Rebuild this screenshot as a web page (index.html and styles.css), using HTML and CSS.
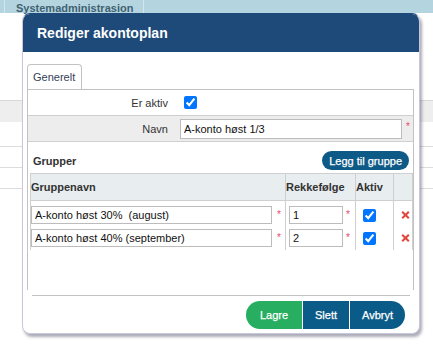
FILE: index.html
```html
<!DOCTYPE html>
<html>
<head>
  <title>Rediger akontoplan</title>
  <link rel="stylesheet" href="styles.css">
</head>
<body>
  <div class="top-bar">
    <div class="top-tab">Systemadministrasion</div>
  </div>
  <div class="page-list">
    <div class="list-head"></div>
    <div class="list-row first"></div>
    <div class="list-row"></div>
    <div class="list-row"></div>
  </div>

  <div class="dialog">
    <header class="dialog-header">Rediger akontoplan</header>
    <div class="dialog-body">
      <div class="tabs">
        <span class="tab">Generelt</span>
      </div>
      <div class="tab-panel">
        <div class="form-row">
          <label class="form-label">Er aktiv</label>
          <div class="form-field"><input type="checkbox" class="check" checked></div>
        </div>
        <div class="form-row shaded">
          <label class="form-label">Navn</label>
          <div class="form-field">
            <input type="text" class="name-input" value="A-konto høst 1/3">
            <span class="req">*</span>
          </div>
        </div>

        <div class="group-bar">
          <span class="group-title">Grupper</span>
          <button class="add-btn">Legg til gruppe</button>
        </div>

        <div class="group-table">
          <div class="grid-row head">
            <div class="cell">Gruppenavn</div>
            <div class="cell center">Rekkefølge</div>
            <div class="cell center">Aktiv</div>
            <div class="cell"></div>
          </div>
          <div class="grid-row first">
            <div class="cell"><input type="text" class="group-input" value="A-konto høst 30%  (august)"><span class="req">*</span></div>
            <div class="cell col-order"><input type="text" class="order-input" value="1"><span class="req">*</span></div>
            <div class="cell col-active"><input type="checkbox" class="check" checked></div>
            <div class="cell col-del">
              <svg width="9" height="8" viewBox="0 0 9 8"><path d="M1.2 0.8 L7.8 7.2 M7.8 0.8 L1.2 7.2" stroke="#e2473d" stroke-width="2.1"/></svg>
            </div>
          </div>
          <div class="grid-row last">
            <div class="cell"><input type="text" class="group-input" value="A-konto høst 40% (september)"><span class="req">*</span></div>
            <div class="cell col-order"><input type="text" class="order-input" value="2"><span class="req">*</span></div>
            <div class="cell col-active"><input type="checkbox" class="check" checked></div>
            <div class="cell col-del">
              <svg width="9" height="8" viewBox="0 0 9 8"><path d="M1.2 0.8 L7.8 7.2 M7.8 0.8 L1.2 7.2" stroke="#e2473d" stroke-width="2.1"/></svg>
            </div>
          </div>
        </div>
      </div>

      <div class="dialog-footer">
        <div class="btn-group">
          <button class="btn btn-save">Lagre</button>
          <button class="btn btn-delete">Slett</button>
          <button class="btn btn-cancel">Avbryt</button>
        </div>
      </div>
    </div>
  </div>
</body>
</html>
```

FILE: styles.css
```css
body {
  margin: 0;
  height: 354px;
  overflow: hidden;
  position: relative;
  background-color: #fff;
  color: #333;
  font-family: "Liberation Sans", Arial, sans-serif;
  font-size: 11px;
}

/* page behind the dialog */
.top-bar {
  height: 13px;
  background-color: #b4d5e0;
  display: flex;
}

.top-tab {
  margin-left: 4px;
  width: 140px;
  height: 13px;
  box-sizing: border-box;
  border-left: 1px solid #d3e6ec;
  border-right: 1px solid #d3e6ec;
  padding: 2px 0 0 11px;
  font-weight: bold;
  line-height: 13px;
  color: #3f6273;
  white-space: nowrap;
}

.page-list {
  margin-top: 87px;
}

.list-head {
  height: 21px;
  background-color: #eee;
  border-top: 1px solid #d8d8d8;
}

.list-row {
  height: 20px;
  border-bottom: 1px solid #ddd;
}

.list-row.first {
  height: 24px;
}

/* dialog */
.dialog {
  position: absolute;
  left: 22px;
  top: 13px;
  width: 398px;
  height: 321px;
  box-sizing: border-box;
  background-color: #fff;
  border: 1px solid #c8c8da;
  border-top-color: #1e4a79;
  border-radius: 8px;
  box-shadow: 2px 3px 3px rgba(70, 70, 100, 0.45);
  overflow: hidden;
}

.dialog-header {
  height: 38px;
  background-color: #1e4a79;
  color: #fff;
  font-weight: bold;
  font-size: 14px;
  line-height: 38px;
  padding-left: 14px;
}

.dialog-body {
  padding: 12px 5px 0 4px;
}

.tabs {
  display: flex;
}

.tab {
  width: 55px;
  height: 25px;
  box-sizing: border-box;
  border: 1px solid #c2c2c2;
  border-bottom: none;
  border-radius: 4px 4px 0 0;
  padding-left: 5px;
  line-height: 24px;
  color: #35405a;
}

.tab-panel {
  height: 201px;
  box-sizing: border-box;
  border: 1px solid #c2c2c2;
  border-bottom: none;
}

.form-row {
  display: grid;
  grid-template-columns: 148px 1fr;
  align-items: center;
  height: 25px;
}

.form-row.shaded {
  background-color: #ededed;
  border-top: 1px solid #cfcfcf;
  border-bottom: 1px solid #cfcfcf;
}

.form-label {
  text-align: right;
  padding-right: 8px;
}

.form-field {
  display: flex;
  align-items: center;
  padding-left: 4px;
}

.check {
  width: 13px;
  height: 13px;
  margin: 0;
}

.form-field .check {
  margin-left: 4px;
}

input[type="text"] {
  box-sizing: border-box;
  border: 1px solid #bcbcbc;
  padding: 0 3px;
  font-family: "Liberation Sans", Arial, sans-serif;
  font-size: 11px;
  color: #111;
  background-color: #fff;
  outline: none;
}

.name-input {
  width: 222px;
  height: 20px;
}

.req {
  align-self: flex-start;
  margin-left: 4px;
  margin-top: 3px;
  font-size: 10px;
  line-height: 10px;
  color: #e54b6b;
}

.group-bar {
  display: flex;
  justify-content: space-between;
  align-items: center;
  height: 19px;
  margin: 9px 4px 3px 5px;
}

.group-title {
  font-weight: bold;
}

.add-btn {
  height: 19px;
  padding: 0 7px;
  border: none;
  border-radius: 10px;
  background-color: #0e5a87;
  color: #fff;
  font-family: "Liberation Sans", Arial, sans-serif;
  font-size: 11px;
  -webkit-text-stroke: 0.25px #fff;
}

.group-table {
  margin-left: 2px;
  border-left: 1px solid #cfcfcf;
  border-right: 1px solid #cfcfcf;
}

.grid-row {
  display: grid;
  grid-template-columns: 254px 70px 38px 19px;
}

.grid-row .cell + .cell {
  border-left: 1px solid #cfcfcf;
}

.grid-row.head {
  background-color: #e8edef;
  border-top: 1px solid #cfcfcf;
  border-bottom: 1px solid #cfcfcf;
}

.head .cell {
  height: 21px;
  line-height: 21px;
  font-weight: bold;
  padding-left: 3px;
}

.head .cell.center {
  padding-left: 0;
  text-align: center;
}

.grid-row .cell {
  display: flex;
  align-items: center;
  padding: 3px 0 2px;
}

.grid-row.first .cell {
  padding-top: 5px;
}

.grid-row.last .cell {
  padding-bottom: 3px;
}

.grid-row .req {
  margin-top: 4px;
}

.group-input {
  width: 241px;
  height: 18px;
}

.grid-row .group-input + .req {
  margin-left: 5px;
}

.col-order {
  padding-left: 3px !important;
}

.order-input {
  width: 54px;
  height: 18px;
}

.col-order .req {
  margin-left: 3px;
}

.col-active {
  padding-left: 7px !important;
}

.col-del {
  padding-left: 7px !important;
}

.dialog-footer {
  display: flex;
  justify-content: flex-end;
  margin: 5px 4px 0 5px;
  padding: 5px 5px 0 0;
  border-top: 1px solid #c2c2c2;
}

.btn-group {
  display: flex;
  border-radius: 14px;
  overflow: hidden;
}

.btn {
  height: 28px;
  border: none;
  padding: 0;
  background-color: #0b5b89;
  color: #fff;
  font-family: "Liberation Sans", Arial, sans-serif;
  font-size: 11px;
  -webkit-text-stroke: 0.25px #fff;
}

.btn + .btn {
  border-left: 1px solid #fff;
}

.btn-save {
  width: 56px;
  background-color: #27ae60;
}

.btn-delete {
  width: 47px;
}

.btn-cancel {
  width: 56px;
}
```
